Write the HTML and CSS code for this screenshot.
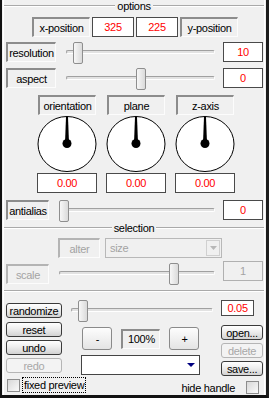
FILE: index.html
```html
<!DOCTYPE html>
<html lang="en">
<head>
    <meta charset="UTF-8">
    <title>options</title>
    <link rel="stylesheet" href="styles.css">
</head>
<body>
<div class="window">
  <div class="panel">
    <div class="group-title"><span>options</span></div>

    <div class="pos-row">
      <span class="tag pos-tag">x-position</span>
      <span class="val pos-val">325</span>
      <span class="val pos-val">225</span>
      <span class="tag pos-tag">y-position</span>
    </div>

    <div class="slider-row res-row">
      <span class="tag wide">resolution</span>
      <div class="slider"><div class="track"></div><div class="thumb" style="left: 11px"></div></div>
      <span class="val side">10</span>
    </div>
    <div class="slider-row aspect-row">
      <span class="tag wide">aspect</span>
      <div class="slider"><div class="track"></div><div class="thumb" style="left: 74px"></div></div>
      <span class="val side">0</span>
    </div>

    <div class="dials">
      <div class="dial">
        <span class="tag dial-tag">orientation</span>
        <svg class="knob" width="60" height="57" viewBox="0 0 60 57">
          <ellipse cx="30" cy="28" rx="29" ry="27.5" fill="#fff" stroke="#000"/>
          <polygon points="29,1 31,1 32,27 28,27" fill="#000"/>
          <circle cx="30" cy="27.5" r="4.5" fill="#000"/>
        </svg>
        <span class="val dial-val">0.00</span>
      </div>
      <div class="dial">
        <span class="tag dial-tag">plane</span>
        <svg class="knob" width="60" height="57" viewBox="0 0 60 57">
          <ellipse cx="30" cy="28" rx="29" ry="27.5" fill="#fff" stroke="#000"/>
          <polygon points="29,1 31,1 32,27 28,27" fill="#000"/>
          <circle cx="30" cy="27.5" r="4.5" fill="#000"/>
        </svg>
        <span class="val dial-val">0.00</span>
      </div>
      <div class="dial">
        <span class="tag dial-tag">z-axis</span>
        <svg class="knob" width="60" height="57" viewBox="0 0 60 57">
          <ellipse cx="30" cy="28" rx="29" ry="27.5" fill="#fff" stroke="#000"/>
          <polygon points="29,1 31,1 32,27 28,27" fill="#000"/>
          <circle cx="30" cy="27.5" r="4.5" fill="#000"/>
        </svg>
        <span class="val dial-val">0.00</span>
      </div>
    </div>

    <div class="slider-row aa-row">
      <span class="tag narrow">antialias</span>
      <div class="slider"><div class="track"></div><div class="thumb" style="left: 4px"></div></div>
      <span class="val side">0</span>
    </div>

    <div class="group-title"><span>selection</span></div>

    <div class="alter-row">
      <span class="tag off alter">alter</span>
      <div class="combo off">
        <span class="combo-text">size</span>
        <span class="combo-btn">
          <svg width="7" height="4" viewBox="0 0 7 4"><polygon points="0,0 7,0 3.5,4" fill="#b8b8b8"/></svg>
        </span>
      </div>
    </div>

    <div class="slider-row scale-row">
      <span class="tag narrow off">scale</span>
      <div class="slider"><div class="track"></div><div class="thumb" style="left: 114px"></div></div>
      <span class="val side off">1</span>
    </div>

    <div class="rule"></div>

    <div class="bottom">
      <div class="col-left">
        <button class="btn">randomize</button>
        <button class="btn reset">reset</button>
        <button class="btn">undo</button>
        <button class="btn" disabled>redo</button>
      </div>
      <div class="col-mid">
        <div class="slider"><div class="track"></div><div class="thumb" style="left: 11px"></div></div>
        <div class="zoom-row">
          <button class="btn big">-</button>
          <span class="tag zoom">100%</span>
          <button class="btn big">+</button>
        </div>
        <div class="combo preset">
          <span class="combo-text"></span>
          <svg width="8" height="4" viewBox="0 0 8 4"><polygon points="0,0 8,0 4,4" fill="#000080"/></svg>
        </div>
      </div>
      <div class="col-right">
        <span class="val small">0.05</span>
        <button class="btn open">open...</button>
        <button class="btn" disabled>delete</button>
        <button class="btn">save...</button>
      </div>
    </div>

    <div class="foot">
      <label class="check fixed"><span class="box"></span><span class="focus">fixed preview</span></label>
      <label class="check hide"><span>hide handle</span><span class="box"></span></label>
    </div>
  </div>
</div>
</body>
</html>
```

FILE: styles.css
```css
body { margin: 0; font-family: "Liberation Sans", Arial, sans-serif; font-size: 11px; letter-spacing: -0.3px; color: #000; }
.window {
    width: 269px;
    height: 398px;
    box-sizing: border-box;
    background: #f0f0f0;
    border-left: 2px solid #111;
    border-right: 3px solid #1c1c1c;
    border-bottom: 3px solid #111;
    overflow: hidden;
}
.panel {
    height: 100%;
    box-sizing: border-box;
    margin: 0 1px;
    border-left: 1px solid #fff;
    border-right: 1px solid #fff;
    padding: 0 1px 0 2px;
}

/* group titles and rules */
.group-title { display: flex; align-items: center; height: 12px; margin: 0 -1px 0 -2px; }
.group-title::before, .group-title::after {
    content: "";
    flex: 1;
    border-top: 1px solid #a9a9a9;
    border-bottom: 1px solid #fff;
}
.group-title span { padding: 0 2px; line-height: 12px; }
.rule { margin: 5px -1px 0 -2px; border-top: 1px solid #a9a9a9; border-bottom: 1px solid #fff; }

/* boxes */
.tag, .val {
    display: flex;
    align-items: center;
    justify-content: center;
    box-sizing: border-box;
    height: 20px;
    white-space: nowrap;
}
.tag {
    border-top: 2px solid #8c8c8c;
    border-left: 2px solid #8c8c8c;
    border-right: 1px solid #fcfcfc;
    border-bottom: 1px solid #fcfcfc;
}
.val { background: #fff; border: 1px solid #4a4a4a; color: #f00; }
.off { color: #a3a3a3; }
.tag.off { border-top-color: #b4b4b4; border-left-color: #b4b4b4; }
.val.off { background: #f0f0f0; border-color: #b0b0b0; }

.pos-row { display: flex; justify-content: center; gap: 2px; margin-top: 5px; padding-left: 1px; }
.pos-tag { width: 58px; }
.pos-val { width: 42px; }

/* sliders */
.slider-row { display: flex; align-items: flex-start; height: 22px; }
.res-row { margin-top: 5px; }
.aspect-row { margin-top: 4px; }
.aa-row { margin-top: 7px; }
.wide { width: 50px; }
.narrow { width: 43px; }
.side { width: 40px; margin-left: auto; }
.slider-row .slider { flex: 1; margin: 0 6px; }
.slider { position: relative; height: 22px; }
.track {
    position: absolute;
    left: 4px;
    right: 2px;
    top: 8px;
    height: 4px;
    box-sizing: border-box;
    border-top: 1px solid #a0a0a0;
    border-left: 1px solid #a0a0a0;
    border-bottom: 1px solid #fff;
    border-right: 1px solid #fff;
    background: #e2e2e2;
    border-radius: 2px;
}
.thumb {
    position: absolute;
    top: 0;
    width: 10px;
    height: 22px;
    box-sizing: border-box;
    border: 1px solid #8e8e8e;
    border-radius: 2px;
    background: linear-gradient(90deg, #f7f7f7, #dadada);
}

/* dials */
.dials { display: flex; justify-content: center; gap: 9px; margin-top: 5px; padding-left: 3px; }
.dial { display: flex; flex-direction: column; align-items: center; width: 60px; }
.dial-tag { width: 58px; }
.knob { display: block; margin-top: 1px; }
.dial-val { width: 60px; }

/* selection */
.alter-row { display: flex; gap: 5px; margin-top: 4px; padding-left: 52px; }
.alter { width: 42px; }
.combo {
    display: flex;
    align-items: center;
    box-sizing: border-box;
    height: 20px;
    border: 1px solid #444;
    background: #fff;
}
.combo.off { width: 117px; border-color: #b8b8b8; background: #f0f0f0; }
.combo-text { flex: 1; padding-left: 4px; }
.combo-btn {
    display: flex;
    align-items: center;
    justify-content: center;
    width: 14px;
    height: 16px;
    margin-right: 1px;
    box-sizing: border-box;
    border: 1px solid #d0d0d0;
}
.scale-row { margin-top: 3px; height: 24px; }
.scale-row .tag { margin-top: 3px; }
.scale-row .slider { margin-top: 2px; }

/* bottom area */
.bottom { display: flex; margin-top: 8px; }
.col-left { display: flex; flex-direction: column; gap: 3px; width: 56px; padding-top: 3px; }
.col-mid { display: flex; flex-direction: column; align-items: center; width: 149px; margin: 0 6px 0 5px; }
.col-mid .slider { width: 100%; }
.col-right { display: flex; flex-direction: column; width: 42px; }
.btn {
    display: flex;
    align-items: center;
    justify-content: center;
    box-sizing: border-box;
    height: 15px;
    padding: 0;
    font: inherit;
    letter-spacing: inherit;
    color: #000;
    border: 1px solid #3a3a3a;
    border-radius: 3px;
    background: linear-gradient(#ffffff, #eeeeee 45%, #d2d2d2);
}
.btn:disabled { color: #a8a8a8; border-color: #b5b5b5; background: #f3f3f3; }
.reset { margin-top: 1px; }
.zoom-row { display: flex; align-items: center; gap: 9px; margin-top: 5px; }
.big { width: 30px; height: 23px; border-color: #8a8a8a; background: linear-gradient(#fdfdfd, #e4e4e4); }
.zoom { width: 39px; height: 20px; }
.preset { width: 119px; margin-top: 5px; padding-right: 4px; }
.small { width: 33px; height: 16px; }
.open { margin-top: 9px; }
.col-right .btn + .btn { margin-top: 3px; }

/* checkboxes */
.foot { display: flex; justify-content: space-between; align-items: flex-start; margin-top: 1px; }
.check { display: flex; align-items: center; gap: 2px; }
.box {
    width: 13px;
    height: 13px;
    box-sizing: border-box;
    border: 1px solid #8d8d8d;
    background: linear-gradient(135deg, #d8d8d8, #fafafa);
}
.fixed { margin-left: 1px; }
.focus { border: 1px dotted #000; padding: 0 1px; line-height: 14px; }
.hide { gap: 11px; margin-top: 4px; margin-right: 4px; }
```
